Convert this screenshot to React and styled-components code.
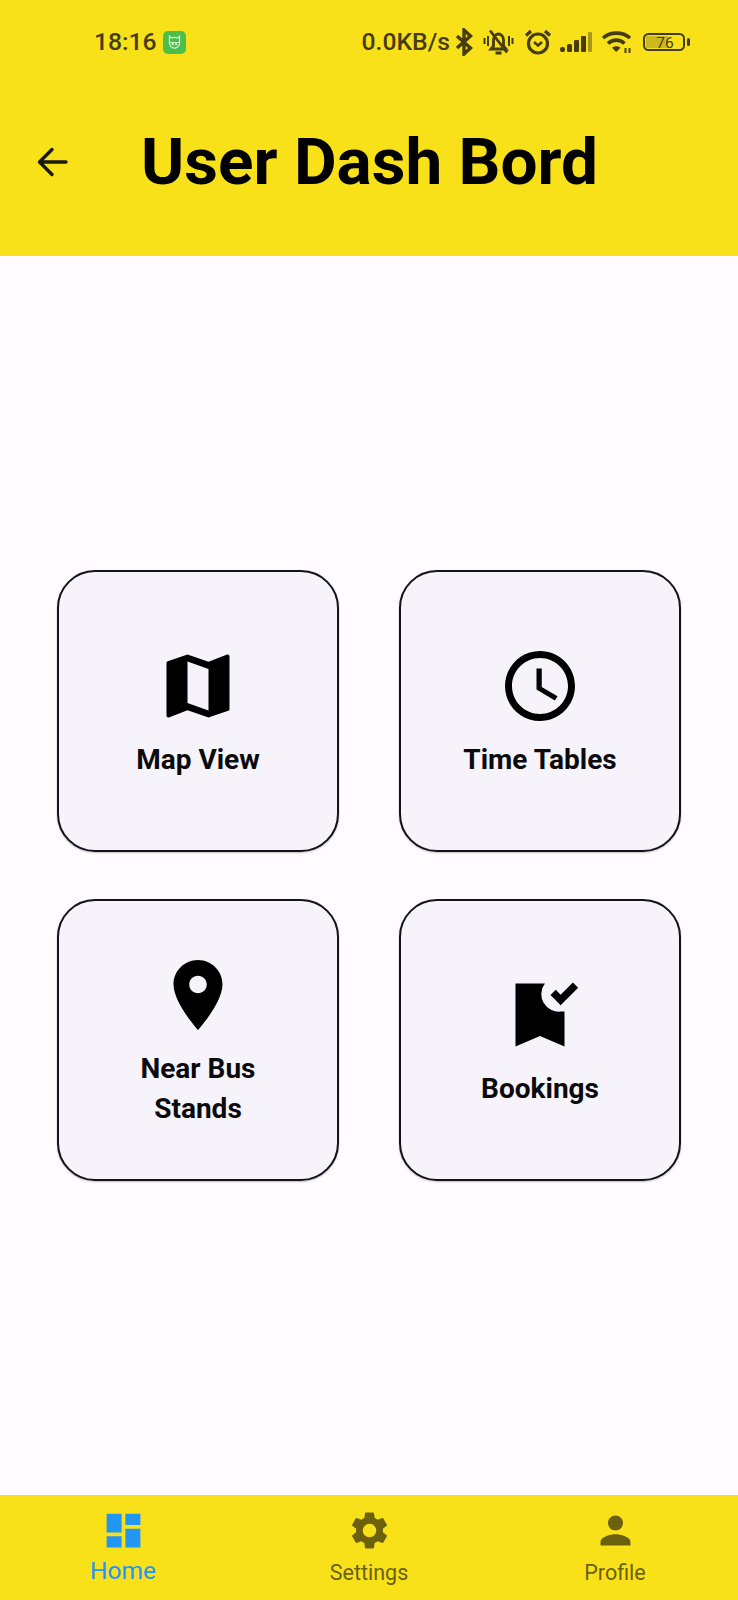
import React from "react";
import styled, { createGlobalStyle } from "styled-components";

const GlobalStyle = createGlobalStyle`
  html, body {
    margin: 0;
    padding: 0;
    background: #fffbfe;
    font-family: Roboto, "Liberation Sans", sans-serif;
  }
  * {
    box-sizing: border-box;
  }
`;

const Page = styled.div`
  width: 738px;
  height: 1600px;
  display: flex;
  flex-direction: column;
  background: #fffbfe;
`;

const Header = styled.header`
  height: 256px;
  background: #f9e11a;
  display: flex;
  flex-direction: column;
`;

const StatusBar = styled.div`
  height: 84px;
  padding: 0 48px 0 94px;
  display: flex;
  align-items: center;
  justify-content: space-between;
  color: #453d10;
`;

const StatusGroup = styled.div`
  display: flex;
  align-items: center;
`;

const StatusText = styled.span`
  font-size: 24.7px;
  line-height: 30px;
  font-weight: 500;
  margin-right: ${props => props.gap || 0}px;
`;

const AppBadge = styled.div`
  width: 23px;
  height: 23px;
  border-radius: 5px;
  background: #4cbf4a;
  display: flex;
  align-items: center;
  justify-content: center;
`;

const StatusIcon = styled.svg`
  display: block;
  margin-left: ${props => props.gap || 0}px;
  flex: none;
`;

const AppBar = styled.div`
  display: flex;
  align-items: center;
  height: 156px;
  padding-left: 37px;
`;

const BackIcon = styled.svg`
  width: 31px;
  height: 30px;
  flex: none;
  margin-right: 73px;
`;

const Title = styled.h1`
  margin: 0;
  font-size: 65.7px;
  line-height: 78px;
  font-weight: 700;
  color: #000;
`;

const Content = styled.main`
  flex: 1;
  display: flex;
  align-items: center;
  justify-content: center;
`;

const Grid = styled.div`
  display: grid;
  grid-template-columns: 282px 282px;
  grid-auto-rows: 282px;
  column-gap: 60px;
  row-gap: 47px;
  margin-top: -1px;
`;

const Card = styled.div`
  border: 2px solid #14121a;
  border-radius: 38px;
  padding-top: 2px;
  background: #f6f3fa;
  box-shadow: 0 1px 2px rgba(0, 0, 0, 0.25);
  display: flex;
  flex-direction: column;
  align-items: center;
  justify-content: center;
`;

const CardIcon = styled.svg`
  width: 84px;
  height: 84px;
  display: block;
  fill: #000;
`;

const CardLabel = styled.div`
  margin-top: 12px;
  font-size: 28px;
  line-height: 40px;
  font-weight: 700;
  text-align: center;
  color: #0b0b0e;
`;

const BottomNav = styled.nav`
  height: 105px;
  background: #f9e11a;
  display: grid;
  grid-template-columns: repeat(3, 1fr);
`;

const NavItem = styled.div`
  display: flex;
  flex-direction: column;
  align-items: center;
  padding-top: 13px;
  color: ${props => (props.active ? "#2196f3" : "#6b600c")};
`;

const NavIcon = styled.svg`
  width: 45px;
  height: 45px;
  display: block;
  fill: currentColor;
`;

const NavLabel = styled.span`
  font-size: ${props => (props.active ? 24.5 : 21.5)}px;
  line-height: 28px;
  margin-top: ${props => (props.active ? 4 : 6)}px;
`;

const icons = {
  map: "M20.5 3l-.16.03L15 5.1 9 3 3.36 4.9c-.21.07-.36.25-.36.48V20.5c0 .28.22.5.5.5l.16-.03L9 18.9l6 2.1 5.64-1.9c.21-.07.36-.25.36-.48V3.5c0-.28-.22-.5-.5-.5zM15 19l-6-2.11V5l6 2.11V19z",
  clock: "M11.99 2C6.47 2 2 6.48 2 12s4.47 10 9.99 10C17.52 22 22 17.52 22 12S17.52 2 11.99 2zM12 20c-4.42 0-8-3.58-8-8s3.58-8 8-8 8 3.58 8 8-3.58 8-8 8zm.5-13H11v6l5.25 3.15.75-1.23-4.5-2.67V7z",
  place: "M12 2C8.13 2 5 5.13 5 9c0 5.25 7 13 7 13s7-7.75 7-13c0-3.87-3.13-7-7-7zm0 9.5c-1.38 0-2.5-1.12-2.5-2.5s1.12-2.5 2.5-2.5 2.5 1.12 2.5 2.5-1.12 2.5-2.5 2.5z",
  booking: "M5 3h8.4A5 5 0 0 0 18 11h1v10l-7-3-7 3zM17.9 9.200l-2.900-2.900 1.500-1.500 1.400 1.400 3.500-3.500 1.500 1.500z",
  home: "M3 13h8V3H3v10zm0 8h8v-6H3v6zm10 0h8V11h-8v10zm0-18v6h8V3h-8z",
  settings: "M19.14 12.94c.04-.3.06-.61.06-.94 0-.32-.02-.64-.07-.94l2.03-1.58c.18-.14.23-.41.12-.61l-1.92-3.32c-.12-.22-.37-.29-.59-.22l-2.39.96c-.5-.38-1.03-.7-1.62-.94l-.36-2.54c-.04-.24-.24-.41-.48-.41h-3.84c-.24 0-.43.17-.47.41l-.36 2.54c-.59.24-1.13.57-1.62.94l-2.39-.96c-.22-.08-.47 0-.59.22L2.74 8.87c-.12.21-.08.47.12.61l2.03 1.58c-.05.3-.09.63-.09.94s.02.64.07.94l-2.03 1.58c-.18.14-.23.41-.12.61l1.92 3.32c.12.22.37.29.59.22l2.39-.96c.5.38 1.03.7 1.62.94l.36 2.54c.05.24.24.41.48.41h3.84c.24 0 .44-.17.47-.41l.36-2.54c.59-.24 1.13-.56 1.62-.94l2.39.96c.22.08.47 0 .59-.22l1.92-3.32c.12-.22.07-.47-.12-.61l-2.01-1.58zM12 15.6c-1.98 0-3.6-1.62-3.6-3.6s1.62-3.6 3.6-3.6 3.6 1.62 3.6 3.6-1.62 3.6-3.6 3.6z",
  person: "M12 12c2.21 0 4-1.79 4-4s-1.79-4-4-4-4 1.79-4 4 1.79 4 4 4zm0 2c-2.67 0-8 1.34-8 4v2h16v-2c0-2.66-5.33-4-8-4z"
};

const cards = [
  { icon: "map", label: ["Map View"] },
  { icon: "clock", label: ["Time Tables"] },
  { icon: "place", label: ["Near Bus", "Stands"] },
  { icon: "booking", label: ["Bookings"] }
];

const navItems = [
  { icon: "home", label: "Home", active: true },
  { icon: "settings", label: "Settings" },
  { icon: "person", label: "Profile" }
];

const App = () => (
  <>
    <GlobalStyle />
    <Page>
      <Header>
        <StatusBar>
          <StatusGroup>
            <StatusText gap={6}>18:16</StatusText>
            <AppBadge>
              <svg width="17" height="17" viewBox="0 0 15 15" fill="none" stroke="#dff5d8" strokeWidth="1">
                <path d="M3 2l1.500 1.500C6 3 9 3 10.500 3.500L12 2v6c0 2.500-2 4.500-4.500 4.500S3 10.500 3 8z" />
                <path d="M3 7.500h9" strokeWidth=".8" />
                <circle cx="6" cy="9" r=".5" />
                <circle cx="9" cy="9" r=".5" />
              </svg>
            </AppBadge>
          </StatusGroup>
          <StatusGroup>
            <StatusText>0.0KB/s</StatusText>
            <StatusIcon gap={5} width="18" height="28" viewBox="0 0 18 28" fill="none" stroke="#453d10" strokeWidth="3.400">
              <path d="M2 8l13.500 12L9 26V2l6.500 6L2 20" />
            </StatusIcon>
            <StatusIcon gap={10} width="31" height="26" viewBox="0 0 31 26" fill="none" stroke="#453d10" strokeWidth="2.800">
              <path d="M8 20h15l-2.500-3v-6c0-3.500-2.500-6-5-6s-5 2.500-5 6v6z" />
              <path d="M12.500 24h6" strokeWidth="3" />
              <path d="M7 1.500l17 22" />
              <path d="M1.500 9v6M5 7v10M26 7v10M29.500 9v6" strokeWidth="2" />
            </StatusIcon>
            <StatusIcon gap={10} width="28" height="26" viewBox="0 0 28 26" fill="none" stroke="#453d10" strokeWidth="3.200">
              <circle cx="14" cy="14.500" r="9.500" />
              <path d="M10 13l4 3.500 4-3.500" strokeWidth="2.600" />
              <path d="M2 6.500l5-4.500M26 6.500l-5-4.500" />
            </StatusIcon>
            <StatusIcon gap={8} width="32" height="20" viewBox="0 0 32 20" fill="#453d10">
              <rect x="0" y="15" width="5" height="5" rx="2" />
              <rect x="7" y="12" width="5" height="8" rx="1.500" />
              <rect x="14" y="8" width="5" height="12" rx="1" />
              <rect x="21" y="4" width="5" height="16" rx="1" />
              <rect x="28" y="0" width="4" height="20" rx="1" fill="#a8981a" />
            </StatusIcon>
            <StatusIcon gap={9} width="32" height="22" viewBox="0 0 32 22" fill="none" stroke="#453d10" strokeWidth="3.600">
              <path d="M2 7C9.500 .5 21.500 .5 29 7" />
              <path d="M7 12.500C11.500 8 19 8 23.500 12.500" />
              <path d="M15.200 21l-4.200-4.200c2.500-2 6-2 8.500 0z" fill="#453d10" stroke="none" />
              <path d="M24.500 17v5M28.500 17v5" strokeWidth="2" />
            </StatusIcon>
            <StatusIcon gap={10} width="47" height="18" viewBox="0 0 47 18">
              <rect x="3" y="3" width="22" height="12" fill="#cdb91a" />
              <rect x="1" y="1" width="40" height="16" rx="4.500" fill="none" stroke="#453d10" strokeWidth="2" />
              <rect x="44" y="5" width="3" height="8" rx="1.500" fill="#453d10" />
              <text x="22" y="15" textAnchor="middle" fontSize="15.500" fontFamily="Roboto, sans-serif" fill="#453d10">76</text>
            </StatusIcon>
          </StatusGroup>
        </StatusBar>
        <AppBar>
          <BackIcon viewBox="0 0 31 30" fill="none" stroke="#1a1a12" strokeWidth="3.400" strokeLinecap="round" strokeLinejoin="round">
            <path d="M29 15H3M15 2.500L2.500 15 15 27.500" />
          </BackIcon>
          <Title>User Dash Bord</Title>
        </AppBar>
      </Header>
      <Content>
        <Grid>
          {cards.map(card => (
            <Card key={card.icon}>
              <CardIcon viewBox="0 0 24 24">
                <path d={icons[card.icon]} fillRule="evenodd" />
              </CardIcon>
              <CardLabel>
                {card.label.map(line => (
                  <div key={line}>{line}</div>
                ))}
              </CardLabel>
            </Card>
          ))}
        </Grid>
      </Content>
      <BottomNav>
        {navItems.map(item => (
          <NavItem key={item.label} active={item.active}>
            <NavIcon viewBox="0 0 24 24">
              <path d={icons[item.icon]} />
            </NavIcon>
            <NavLabel active={item.active}>{item.label}</NavLabel>
          </NavItem>
        ))}
      </BottomNav>
    </Page>
  </>
);

export default App;
